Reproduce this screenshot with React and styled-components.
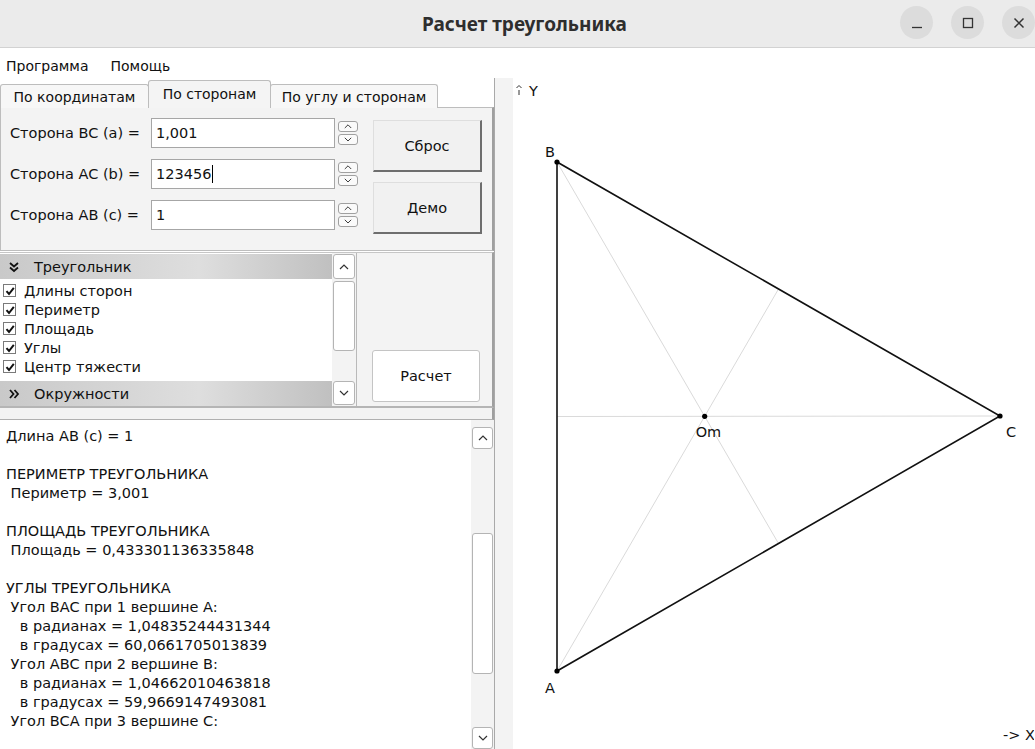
import React from 'react'
import styled, { createGlobalStyle } from 'styled-components'

const Global = createGlobalStyle`
  html, body { margin: 0; padding: 0; background: #ffffff; }
  body { font-family: "DejaVu Sans", "Liberation Sans", sans-serif; color: #111; }
  * { box-sizing: border-box; }
`

const Window = styled.div`
  width: 1035px;
  height: 749px;
  display: flex;
  flex-direction: column;
  overflow: hidden;
  background: #ffffff;
`

const TitleBar = styled.div`
  height: 48px;
  flex: none;
  background: #ebebeb;
  border-bottom: 1px solid #d2d2d2;
  display: flex;
  align-items: center;
  justify-content: center;
  position: relative;
`

const Title = styled.div`
  font-family: "Noto Sans", "DejaVu Sans", sans-serif;
  font-weight: 700;
  font-size: 19px;
  color: #2e2e2e;
  margin-left: 14px;
`

const WinButtons = styled.div`
  position: absolute;
  right: 0;
  top: 6px;
  display: flex;
  gap: 18px;
`

const WinBtn = styled.div`
  width: 33px;
  height: 33px;
  border-radius: 50%;
  background: #dcdcdc;
  display: flex;
  align-items: center;
  justify-content: center;
`

const MenuBar = styled.div`
  height: 30px;
  flex: none;
  display: flex;
  align-items: center;
  gap: 22px;
  padding: 6px 6px 0;
  font-size: 14px;
  background: #ffffff;
`

const Body = styled.div`
  flex: 1;
  display: flex;
  min-height: 0;
`

const LeftCol = styled.div`
  width: 495px;
  flex: none;
  display: flex;
  flex-direction: column;
  border-right: 1px solid #a9a9a9;
`

const Splitter = styled.div`
  width: 18px;
  flex: none;
  background: #f3f3f3;
`

const Canvas = styled.div`
  flex: 1;
  background: #ffffff;
`

const TabRow = styled.div`
  height: 30px;
  display: flex;
  align-items: flex-end;
  padding-top: 2px;
  font-size: 14px;
`

const Tab = styled.div`
  width: ${p => p.$w}px;
  height: ${p => (p.$active ? '28px' : '24px')};
  border: 1px solid #bdbdbd;
  border-bottom: none;
  border-radius: 3px 3px 0 0;
  background: ${p => (p.$active ? '#f4f4f4' : '#f7f7f7')};
  display: flex;
  justify-content: center;
  align-items: ${p => (p.$active ? 'flex-start' : 'center')};
  padding-top: ${p => (p.$active ? '5px' : '0')};
  margin-right: -1px;
  white-space: nowrap;
  position: relative;
  z-index: ${p => (p.$active ? 2 : 1)};
`

const TabPanel = styled.div`
  height: 144px;
  border: 1px solid #bdbdbd;
  border-right: 2px solid #9f9f9f;
  margin-top: -1px;
  background: #f3f3f3;
  display: flex;
  padding: 10px 0 0 9px;
  gap: 15px;
`

const Fields = styled.div`
  display: flex;
  flex-direction: column;
  gap: 11px;
`

const FieldRow = styled.div`
  display: flex;
  align-items: center;
  height: 30px;
  font-size: 14.5px;
`

const Label = styled.div`
  width: 141px;
  flex: none;
  white-space: nowrap;
`

const Input = styled.div`
  width: 184px;
  height: 30px;
  background: #ffffff;
  border: 1px solid #a6a6a6;
  display: flex;
  align-items: center;
  padding-left: 4px;
`

const Caret = styled.span`
  display: inline-block;
  width: 1px;
  height: 18px;
  background: #000;
  margin-left: 1px;
`

const Spin = styled.div`
  margin-left: 3px;
  display: flex;
  flex-direction: column;
  gap: 2px;
`

const SpinBtn = styled.div`
  width: 20px;
  height: 11px;
  border: 1px solid #a0a0a0;
  border-radius: 3px;
  background: #fafafa;
  display: flex;
  align-items: center;
  justify-content: center;
`

const Buttons = styled.div`
  display: flex;
  flex-direction: column;
  gap: 10px;
  margin-top: 2px;
`

const Button3D = styled.div`
  width: 109px;
  height: 52px;
  background: #f1f1f1;
  border-top: 1px solid #dedede;
  border-left: 1px solid #dedede;
  border-right: 2px solid #6e6e6e;
  border-bottom: 2px solid #6e6e6e;
  display: flex;
  align-items: center;
  justify-content: center;
  font-size: 14.5px;
`

const Middle = styled.div`
  height: 156px;
  display: flex;
  border-top: 1px solid #c6c6c6;
  border-bottom: 2px solid #b5b5b5;
  border-right: 2px solid #9f9f9f;
  background: #f3f3f3;
  margin-top: 1px;
`

const ListBox = styled.div`
  width: 357px;
  display: flex;
  border-right: 1px solid #b9b9b9;
`

const ListContent = styled.div`
  width: 333px;
  display: flex;
  flex-direction: column;
  font-size: 14.5px;
  background: #ffffff;
`

const GroupHeader = styled.div`
  height: 25px;
  display: flex;
  align-items: center;
  padding-left: 8px;
  gap: 14px;
  background: linear-gradient(to right, #c9c9c9, #dedede 60%, #c0c0c0);
  margin-top: ${p => (p.$first ? '1px' : '0')};
`

const CheckRow = styled.div`
  height: 19px;
  display: flex;
  align-items: center;
  gap: 8px;
  padding-left: 3px;
`

const Box = styled.div`
  width: 13px;
  height: 13px;
  border: 1px solid #7a7a7a;
  background: #fff;
  display: flex;
  align-items: center;
  justify-content: center;
`

const ListItems = styled.div`
  flex: 1;
  display: flex;
  flex-direction: column;
  padding-top: 2px;
`

const VScroll = styled.div`
  width: 24px;
  display: flex;
  flex-direction: column;
  background: #f3f3f3;
  padding: 1px;
  gap: 2px;
`

const ScrollBtn = styled.div`
  height: ${p => p.$h || 22}px;
  border: 1px solid #b4b4b4;
  border-radius: 3px;
  background: #ffffff;
  display: flex;
  align-items: center;
  justify-content: center;
  margin-top: ${p => p.$mt || 0}px;
`

const Filler = styled.div`
  flex: 1;
`

const CalcArea = styled.div`
  flex: 1;
  display: flex;
  align-items: flex-end;
  padding: 0 0 4px 15px;
`

const CalcBtn = styled.div`
  width: 108px;
  height: 52px;
  border: 1px solid #c4c4c4;
  border-radius: 3px;
  background: #ffffff;
  display: flex;
  align-items: center;
  justify-content: center;
  font-size: 14.5px;
`

const Gap = styled.div`
  height: 12px;
  background: #f3f3f3;
  border-bottom: 1px solid #b0b0b0;
  border-right: 2px solid #9f9f9f;
`

const Output = styled.div`
  flex: 1;
  display: flex;
  background: #ffffff;
  min-height: 0;
`

const OutText = styled.div`
  flex: 1;
  padding: 7px 0 0 6px;
  font-size: 14.5px;
  line-height: 19px;
  white-space: pre;
  overflow: hidden;
`

const OutScroll = styled.div`
  width: 23px;
  background: #f3f3f3;
  display: flex;
  flex-direction: column;
  padding: 7px 1px 0 1px;
`

const Chevron = ({ up, size = 10 }) => (
  <svg width={size} height={size * 0.6} viewBox="0 0 10 6">
    <path d={up ? 'M1 5 L5 1 L9 5' : 'M1 1 L5 5 L9 1'} fill="none" stroke="#333" strokeWidth="1.2" />
  </svg>
)

const DoubleChevron = ({ down }) => (
  <svg width="12" height="12" viewBox="0 0 12 12">
    <path
      d={down ? 'M2 2 L6 5.5 L10 2 M2 6.5 L6 10 L10 6.5' : 'M2 2 L5.5 6 L2 10 M6.5 2 L10 6 L6.5 10'}
      fill="none"
      stroke="#111"
      strokeWidth="1.8"
    />
  </svg>
)

const Check = () => (
  <svg width="10" height="10" viewBox="0 0 10 10">
    <path d="M1.5 5.2 L4 8 L8.8 1.8" fill="none" stroke="#111" strokeWidth="2" />
  </svg>
)

const fields = [
  ['Сторона BC (a) =', '1,001', false],
  ['Сторона AC (b) =', '123456', true],
  ['Сторона AB (c) =', '1', false],
]

const checks = ['Длины сторон', 'Периметр', 'Площадь', 'Углы', 'Центр тяжести']

const output = `Длина AB (c) = 1

ПЕРИМЕТР ТРЕУГОЛЬНИКА
 Периметр = 3,001

ПЛОЩАДЬ ТРЕУГОЛЬНИКА
 Площадь = 0,433301136335848

УГЛЫ ТРЕУГОЛЬНИКА
 Угол BAC при 1 вершине A:
   в радианах = 1,04835244431344
   в градусах = 60,0661705013839
 Угол ABC при 2 вершине B:
   в радианах = 1,04662010463818
   в градусах = 59,9669147493081
 Угол BCA при 3 вершине C:`

// canvas coordinates (canvas origin at 514,78)
const A = [44, 593]
const B = [44, 84]
const C = [487, 338]
const mid = (p, q) => [(p[0] + q[0]) / 2, (p[1] + q[1]) / 2]

function Plot() {
  const mAC = mid(A, C)
  const mBC = mid(B, C)
  const mAB = mid(A, B)
  const om = [(A[0] + B[0] + C[0]) / 3, (A[1] + B[1] + C[1]) / 3]
  const txt = { fontFamily: '"DejaVu Sans", sans-serif', fontSize: 14.5, fill: '#111' }
  return (
    <svg width="521" height="671" style={{ display: 'block' }}>
      <line x1={B[0]} y1={B[1]} x2={mAC[0]} y2={mAC[1]} stroke="#dadada" strokeWidth="1" />
      <line x1={A[0]} y1={A[1]} x2={mBC[0]} y2={mBC[1]} stroke="#dadada" strokeWidth="1" />
      <line x1={C[0]} y1={C[1]} x2={mAB[0]} y2={mAB[1]} stroke="#dadada" strokeWidth="1" />
      <polygon points={`${A.join(',')} ${B.join(',')} ${C.join(',')}`} fill="none" stroke="#111" strokeWidth="1.6" />
      {[A, B, C, om].map((p, i) => (
        <circle key={i} cx={p[0]} cy={p[1]} r="2.6" fill="#000" />
      ))}
      <text x="32" y="79" style={txt}>B</text>
      <text x="32" y="615" style={txt}>A</text>
      <text x="493" y="359" style={txt}>C</text>
      <text x={om[0] - 9} y="359" style={txt}>Om</text>
      <path d="M3.5 10 L6 7.5 L8.5 10 M6 12 L6 17" fill="none" stroke="#333" strokeWidth="1" />
      <text x="16" y="18" style={txt}>Y</text>
      <text x="490" y="662" style={txt}>-&gt; X</text>
    </svg>
  )
}

export default function App() {
  return (
    <Window>
      <Global />
      <TitleBar>
        <Title>Расчет треугольника</Title>
        <WinButtons>
          <WinBtn>
            <svg width="12" height="12" viewBox="0 0 12 12"><path d="M1 10.5 H11" stroke="#333" strokeWidth="1.3" /></svg>
          </WinBtn>
          <WinBtn>
            <svg width="12" height="12" viewBox="0 0 12 12"><rect x="1.5" y="1.5" width="9" height="9" fill="none" stroke="#333" strokeWidth="1.3" /></svg>
          </WinBtn>
          <WinBtn>
            <svg width="12" height="12" viewBox="0 0 12 12"><path d="M1.5 1.5 L10.5 10.5 M10.5 1.5 L1.5 10.5" stroke="#333" strokeWidth="1.5" /></svg>
          </WinBtn>
        </WinButtons>
      </TitleBar>
      <MenuBar>
        <span>Программа</span>
        <span>Помощь</span>
      </MenuBar>
      <Body>
        <LeftCol>
          <TabRow>
            <Tab $w={149}>По координатам</Tab>
            <Tab $active $w={123}>По сторонам</Tab>
            <Tab $w={168}>По углу и сторонам</Tab>
          </TabRow>
          <TabPanel>
            <Fields>
              {fields.map(([l, v, caret]) => (
                <FieldRow key={l}>
                  <Label>{l}</Label>
                  <Input>
                    {v}
                    {caret && <Caret />}
                  </Input>
                  <Spin>
                    <SpinBtn><Chevron up size={8} /></SpinBtn>
                    <SpinBtn><Chevron size={8} /></SpinBtn>
                  </Spin>
                </FieldRow>
              ))}
            </Fields>
            <Buttons>
              <Button3D>Сброс</Button3D>
              <Button3D>Демо</Button3D>
            </Buttons>
          </TabPanel>
          <Middle>
            <ListBox>
              <ListContent>
                <GroupHeader $first>
                  <DoubleChevron down />
                  <span>Треугольник</span>
                </GroupHeader>
                <ListItems>
                  {checks.map(c => (
                    <CheckRow key={c}>
                      <Box><Check /></Box>
                      <span>{c}</span>
                    </CheckRow>
                  ))}
                </ListItems>
                <GroupHeader>
                  <DoubleChevron />
                  <span>Окружности</span>
                </GroupHeader>
              </ListContent>
              <VScroll>
                <ScrollBtn $h={25}><Chevron up size={10} /></ScrollBtn>
                <ScrollBtn $h={70} />
                <Filler />
                <ScrollBtn $h={24}><Chevron size={10} /></ScrollBtn>
              </VScroll>
            </ListBox>
            <CalcArea>
              <CalcBtn>Расчет</CalcBtn>
            </CalcArea>
          </Middle>
          <Gap />
          <Output>
            <OutText>{output}</OutText>
            <OutScroll>
              <ScrollBtn $h={22}><Chevron up size={10} /></ScrollBtn>
              <ScrollBtn $h={141} $mt={84} />
              <Filler />
              <ScrollBtn $h={22}><Chevron size={10} /></ScrollBtn>
            </OutScroll>
          </Output>
        </LeftCol>
        <Splitter />
        <Canvas>
          <Plot />
        </Canvas>
      </Body>
    </Window>
  )
}
